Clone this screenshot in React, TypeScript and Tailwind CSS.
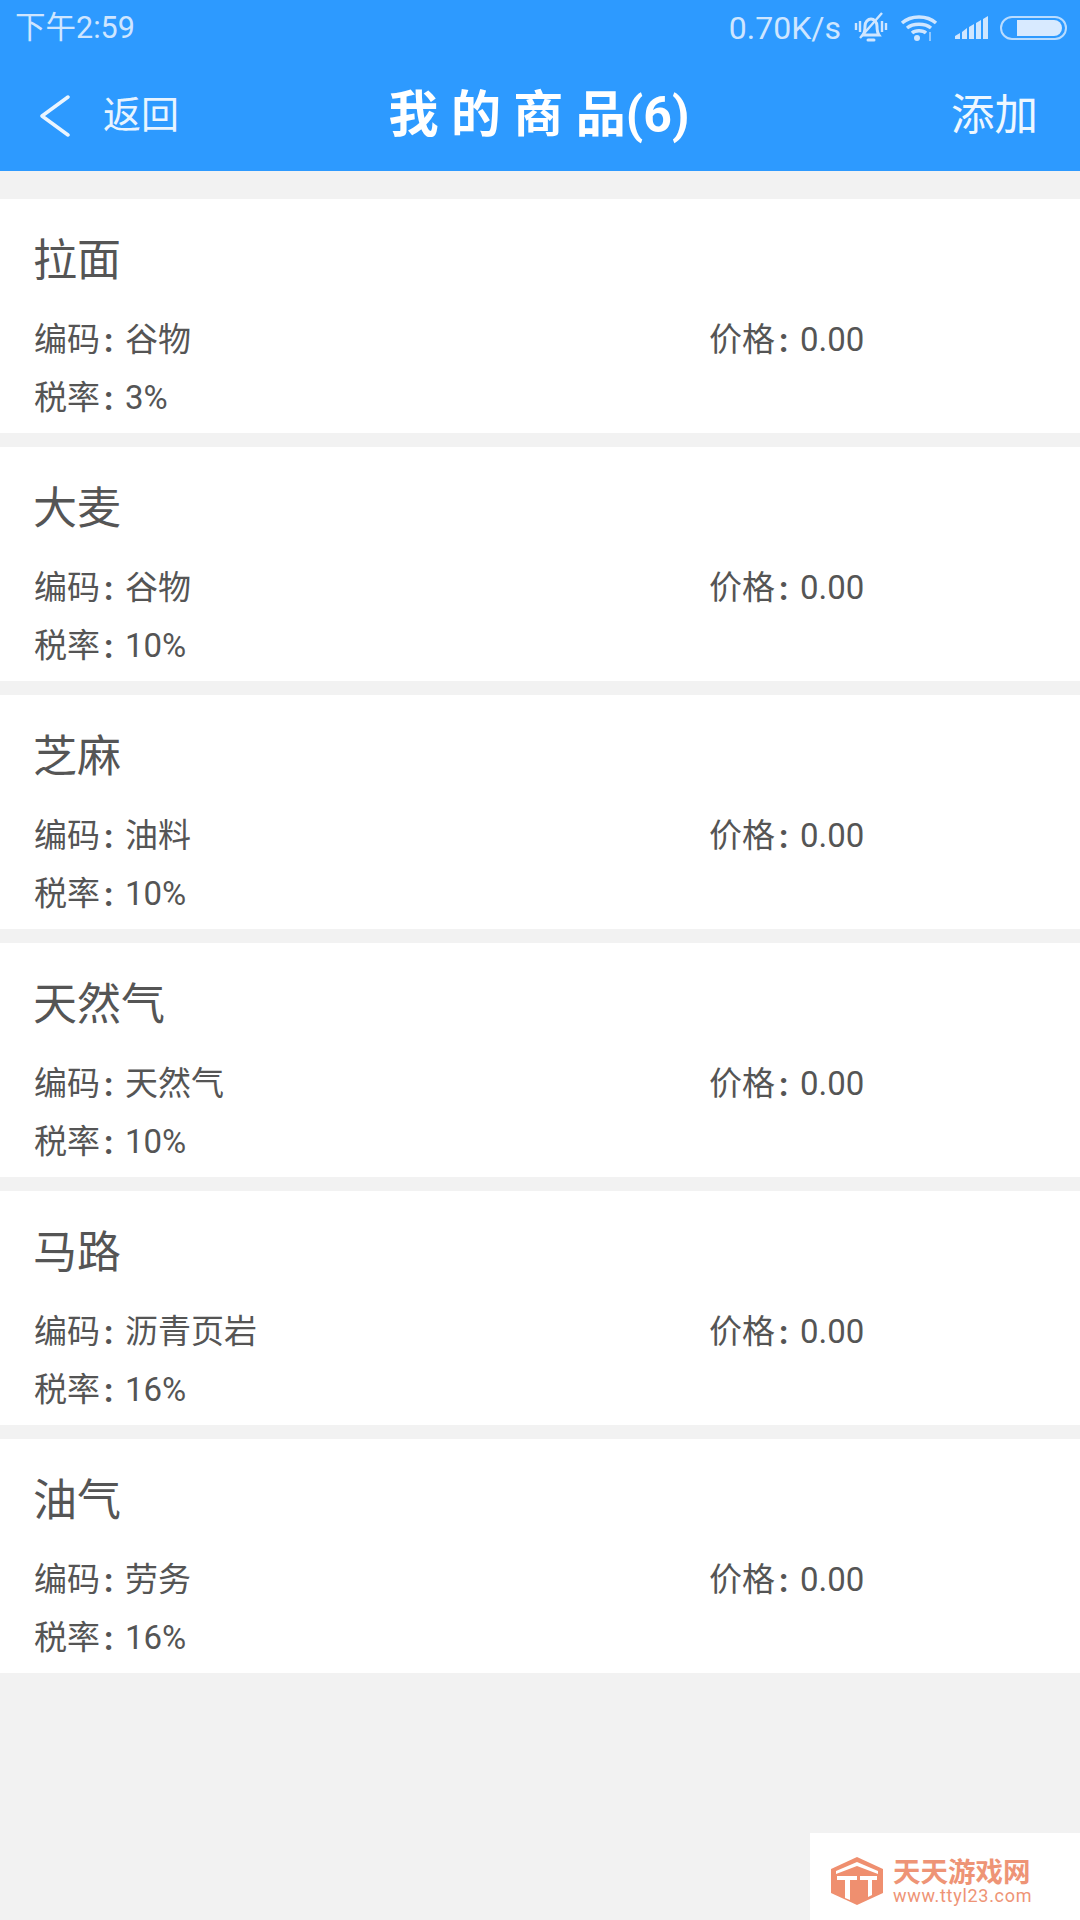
const font = { fontFamily: '"Roboto","Noto Sans CJK SC",sans-serif' };

const items = [
  { name: "拉面", code: "谷物", tax: "3%" },
  { name: "大麦", code: "谷物", tax: "10%" },
  { name: "芝麻", code: "油料", tax: "10%" },
  { name: "天然气", code: "天然气", tax: "10%" },
  { name: "马路", code: "沥青页岩", tax: "16%" },
  { name: "油气", code: "劳务", tax: "16%" },
];

function Label({ k, v }: { k: string; v: string }) {
  return (
    <div className="flex items-center whitespace-nowrap">
      <span>{k}</span>
      <span className="w-[25px] pl-[4px] font-bold leading-none">:</span>
      <span>{v}</span>
    </div>
  );
}

function Card({ name, code, tax }: { name: string; code: string; tax: string }) {
  return (
    <div className="h-[234px] bg-white pl-[34px] text-[#555555]">
      <div className="-ml-[1px] pt-[30px] text-[44px] leading-[64px]">{name}</div>
      <div className="mt-[18px] flex text-[33px] leading-[58px]">
        <div className="w-[675px]">
          <Label k="编码" v={code} />
        </div>
        <Label k="价格" v="0.00" />
      </div>
      <div className="text-[33px] leading-[58px]">
        <Label k="税率" v={tax} />
      </div>
    </div>
  );
}

function StatusIcons() {
  return (
    <div className="flex items-center">
      <svg width="34" height="34" viewBox="0 0 34 34" fill="none" stroke="#cfe6ff" strokeWidth="3" className="ml-[13px]">
        <path d="M9 24c2-3 2-6 2-9 0-4 3-7 6-7s6 3 6 7c0 3 0 6 2 9z" />
        <path d="M14 29h6" strokeLinecap="round" strokeWidth="3" />
        <path d="M2 12v7M6 10v11M32 12v7M28 10v11M6 27 28 2" strokeWidth="2.4" />
      </svg>
      <svg width="38" height="30" viewBox="0 0 38 30" fill="none" stroke="#cfe6ff" strokeWidth="3.4" className="ml-[12px]">
        <path d="M2 10c9-8 25-8 34 0M7 15c6-5 18-5 24 0M12 20c3-3 11-3 14 0" />
        <circle cx="17" cy="25" r="3" fill="#cfe6ff" stroke="none" />
        <path d="M30 19v9" strokeWidth="2" opacity="0.6" />
      </svg>
      <svg width="36" height="26" viewBox="0 0 36 26" fill="#cfe6ff" className="ml-[16px]">
        <path d="M1 21 6 18v6H1zM8 17l5-4v11H8zM15 12l5-3v15h-5zM22 8l5-3v19h-5zM29 4l5-3v23h-5z" />
      </svg>
      <div className="ml-[10px] flex h-[24px] w-[67px] items-center rounded-full border-2 border-[#b9dcff] pl-[15px] pr-[3px]">
        <div className="h-[16px] w-full rounded-r-full bg-[#d8eaff]" />
      </div>
    </div>
  );
}

export default function App() {
  return (
    <div style={font} className="relative flex h-[1920px] w-[1080px] flex-col overflow-hidden bg-[#f2f2f2]">
      <header className="h-[171px] shrink-0 bg-[#2d9aff] text-white">
        <div className="flex h-[56px] items-center justify-between pl-[15px] pr-[13px] text-[#cfe6ff]">
          <span className="text-[30.5px]">下午2:59</span>
          <div className="flex items-center">
            <span className="text-[32px]">0.70K/s</span>
            <StatusIcons />
          </div>
        </div>
        <div className="flex h-[115px] items-center justify-between pt-[4px] pl-[40px] pr-[42px]">
          <div className="flex w-[300px] items-center">
            <svg width="30" height="42" viewBox="0 0 30 42" fill="none" stroke="#eaf5ff" strokeWidth="3.5" strokeLinecap="round" strokeLinejoin="round">
              <path d="M28 2 2 21l26 19" />
            </svg>
            <span className="ml-[33px] text-[38px] text-[#e8f4ff]">返回</span>
          </div>
          <div className="whitespace-pre text-[50px] font-bold">我 的 商 品(6)</div>
          <div className="w-[300px] text-right text-[43.5px] text-[#eef7ff]">添加</div>
        </div>
      </header>

      <main className="flex flex-col gap-[14px] pt-[28px]">
        {items.map((it) => (
          <Card key={it.name} {...it} />
        ))}
      </main>

      <div className="absolute bottom-0 right-0 flex h-[87px] w-[270px] items-start bg-white pl-[20px] pt-[24px]">
        <svg width="54" height="48" viewBox="0 0 54 48" className="shrink-0">
          <path d="M27 0 53 12v24L27 48 1 36V12z" fill="#ef8f6f" />
          <path d="M6 14 27 5l21 9v3L27 9 6 17zM7 19h20v4h-7v20l-5-2V23H7zM30 19h17v4h-5v15l-4 2V23h-8z" fill="#fff" />
        </svg>
        <div className="ml-[9px] pt-[3px] text-[#ee9476]">
          <div className="whitespace-nowrap text-[27.5px] font-bold leading-[26px]">天天游戏网</div>
          <div className="whitespace-nowrap text-[18px] leading-[20px] tracking-[0.7px]">www.ttyl23.com</div>
        </div>
      </div>
    </div>
  );
}
